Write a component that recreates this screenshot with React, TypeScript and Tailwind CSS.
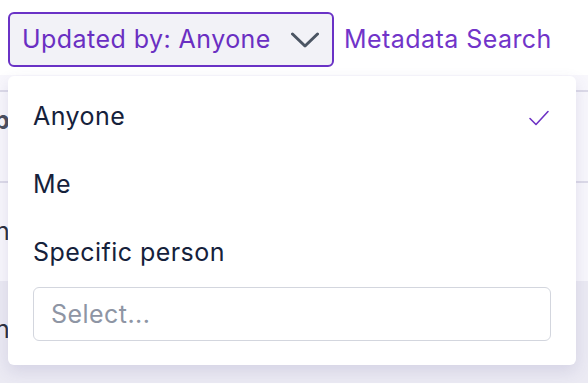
import React, { useState } from 'react';

const ChevronDown = () => (
  <svg width="28" height="16" viewBox="0 0 28 16" fill="none">
    <path d="M1.5 2l12.5 12L26.5 2" stroke="#4b5563" strokeWidth="3" strokeLinecap="round" strokeLinejoin="round" />
  </svg>
);

const CheckMark = () => (
  <svg width="22" height="18" viewBox="0 0 22 18" fill="none">
    <path d="M2 9.5l6 6L20 2.5" stroke="#6d32c4" strokeWidth="1.6" strokeLinecap="round" strokeLinejoin="round" />
  </svg>
);

const options = ['Anyone', 'Me', 'Specific person'];

export default function App() {
  const [selected, setSelected] = useState('Anyone');

  return (
    <div className="relative w-[588px] h-[384px] overflow-hidden bg-white font-['Inter',sans-serif] tracking-[0.45px]">
      {/* header */}
      <div className="h-[75px] flex items-start pt-[12px] pl-[8px] gap-[10px]">
        <button className="h-[55px] flex items-center pl-[12px] pr-[13px] gap-[20px] border-2 border-[#6a32c6] rounded-[6px] bg-[#f2f2f7] text-[25px] text-[#6a2fc2]">
          <span>Updated by: {selected}</span>
          <ChevronDown />
        </button>
        <a href="#" className="h-[55px] flex items-center text-[25px] text-[#7134c9]">
          Metadata Search
        </a>
      </div>

      {/* table behind */}
      <div className="flex flex-col bg-[#f8f7fc]">
        <div className="h-[17px] border-b-2 border-[#dcdae8]" />
        <div className="h-[91px] border-b-2 border-[#dcdae8] flex items-start pt-[10px]">
          <span className="-ml-[6px] text-[25px] font-bold text-[#4b4f5c]">by</span>
        </div>
        <div className="h-[98px] flex items-center">
          <span className="-ml-[5px] text-[25px] text-[#2a2f3c]">h</span>
        </div>
        <div className="h-[102px] bg-[#ebeaf3] flex items-start pt-[30px]">
          <span className="-ml-[5px] text-[25px] text-[#2a2f3c]">h</span>
        </div>
      </div>

      {/* dropdown */}
      <div className="absolute left-[8px] top-[76px] w-[568px] bg-white rounded-[6px] shadow-[0_6px_16px_rgba(80,70,140,0.14)] pt-[7px] pb-[24px] px-[25px]">
        {options.map((o) => (
          <div
            key={o}
            onClick={() => setSelected(o)}
            className="h-[68px] flex items-center justify-between text-[25px] text-[#15213b] cursor-pointer"
          >
            <span>{o}</span>
            {selected === o && (
              <span className="mr-[1px] mt-[2px]">
                <CheckMark />
              </span>
            )}
          </div>
        ))}
        <input
          className="w-full h-[54px] border border-[#d3d6de] rounded-[6px] pl-[17px] text-[25px] text-[#15213b] placeholder:text-[#8e95a4] outline-none"
          placeholder="Select..."
        />
      </div>
    </div>
  );
}
